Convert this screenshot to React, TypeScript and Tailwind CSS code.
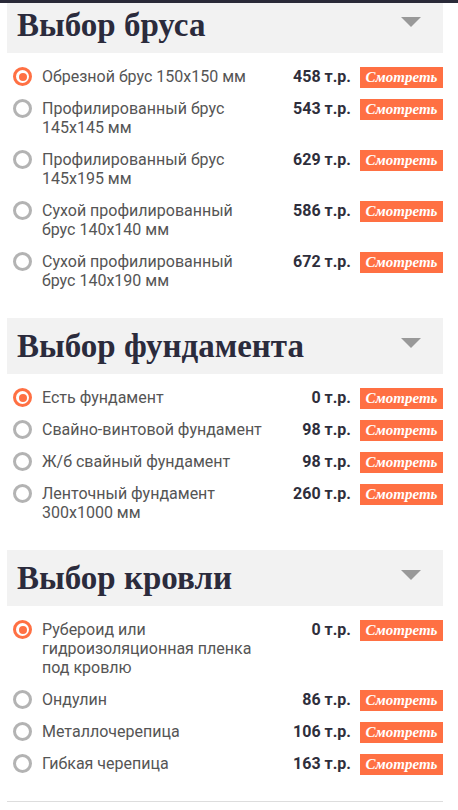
import React from "react";

type Option = { label: string; price: number; selected?: boolean };

type Section = { title: string; options: Option[] };

const sections: Section[] = [
  {
    title: "Выбор бруса",
    options: [
      { label: "Обрезной брус 150x150 мм", price: 458, selected: true },
      { label: "Профилированный брус 145x145 мм", price: 543 },
      { label: "Профилированный брус 145x195 мм", price: 629 },
      { label: "Сухой профилированный брус 140x140 мм", price: 586 },
      { label: "Сухой профилированный брус 140x190 мм", price: 672 },
    ],
  },
  {
    title: "Выбор фундамента",
    options: [
      { label: "Есть фундамент", price: 0, selected: true },
      { label: "Свайно-винтовой фундамент", price: 98 },
      { label: "Ж/б свайный фундамент", price: 98 },
      { label: "Ленточный фундамент 300x1000 мм", price: 260 },
    ],
  },
  {
    title: "Выбор кровли",
    options: [
      { label: "Рубероид или гидроизоляционная пленка под кровлю", price: 0, selected: true },
      { label: "Ондулин", price: 86 },
      { label: "Металлочерепица", price: 106 },
      { label: "Гибкая черепица", price: 163 },
    ],
  },
];

const Radio = ({ checked }: { checked?: boolean }) =>
  checked ? (
    <span className="flex h-[19px] w-[19px] shrink-0 items-center justify-center rounded-full border-[3px] border-[#ff7043]">
      <span className="h-[8px] w-[8px] rounded-full bg-[#ff7043]" />
    </span>
  ) : (
    <span className="h-[19px] w-[19px] shrink-0 rounded-full border-[3px] border-[#b3b3b3]" />
  );

const OptionRow = ({ option }: { option: Option }) => (
  <label className="flex items-start">
    <Radio checked={option.selected} />
    <span className="ml-[10px] w-[222px] text-[16px] leading-[19px] text-[#555555]">
      {option.label}
    </span>
    <span className="flex-1 text-right text-[16px] font-bold leading-[19px] text-[#2e2e3b]">
      {option.price} т.р.
    </span>
    <button className="-mb-[2px] ml-[9px] flex h-[21px] w-[83px] shrink-0 items-center justify-center bg-[#ff7043] font-['Liberation_Serif',serif] text-[15px] font-bold italic leading-none text-white">
      Смотреть
    </button>
  </label>
);

const SectionBlock = ({ section }: { section: Section }) => (
  <section className="pb-[28px]">
    <div className="flex h-[56px] items-center justify-between bg-[#f2f2f2] pl-[10px] pr-[22px]">
      <h2 className="font-['Liberation_Serif',serif] text-[33px] font-bold leading-none text-[#2b2b3c]">
        {section.title}
      </h2>
      <svg width="20" height="10" viewBox="0 0 20 10" className="-mt-[6px]">
        <path d="M0 0h20L10 10z" fill="#999999" />
      </svg>
    </div>
    <div className="flex flex-col gap-[13px] pl-[6px] pt-[14px]">
      {section.options.map((o) => (
        <OptionRow key={o.label} option={o} />
      ))}
    </div>
  </section>
);

export default function App() {
  return (
    <div className="h-[810px] w-[458px] overflow-hidden bg-white font-['Roboto',sans-serif]">
      <div className="relative z-10 h-[3px] bg-[#2a2a38]" />
      <main className="-mt-[6px] ml-[7px] w-[436px]">
        {sections.map((s) => (
          <SectionBlock key={s.title} section={s} />
        ))}
        <div className="border-t border-[#dddddd]" />
      </main>
    </div>
  );
}
